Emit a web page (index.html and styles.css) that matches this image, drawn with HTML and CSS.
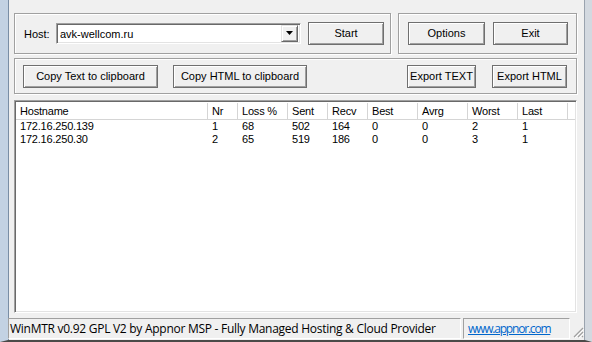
FILE: index.html
```html
<!DOCTYPE html>
<html lang="en">
<head>
    <meta charset="UTF-8">
    <title>WinMTR</title>
    <link rel="stylesheet" href="styles.css">
</head>
<body>
<div class="window">
    <div class="client">
        <div class="top-row">
            <div class="group host-group">
                <span class="host-label">Host:</span>
                <div class="combo">
                    <span class="combo-text">avk-wellcom.ru</span>
                    <span class="combo-btn">
                        <svg width="7" height="4" viewBox="0 0 7 4"><path d="M0 0h7L3.5 4z" fill="#000"/></svg>
                    </span>
                </div>
                <button class="btn btn-start">Start</button>
            </div>
            <div class="group opt-group">
                <button class="btn btn-options">Options</button>
                <button class="btn btn-exit">Exit</button>
            </div>
        </div>

        <div class="group export-group">
            <button class="btn btn-copy">Copy Text to clipboard</button>
            <button class="btn btn-copy2">Copy HTML to clipboard</button>
            <span class="spacer"></span>
            <button class="btn btn-etext">Export TEXT</button>
            <button class="btn btn-ehtml">Export HTML</button>
        </div>

        <div class="list">
            <div class="report">
                <div class="row head">
                    <span>Hostname</span>
                    <span>Nr</span>
                    <span>Loss %</span>
                    <span>Sent</span>
                    <span>Recv</span>
                    <span>Best</span>
                    <span>Avrg</span>
                    <span>Worst</span>
                    <span>Last</span>
                    <span></span>
                </div>
                <div class="row">
                    <span>172.16.250.139</span><span>1</span><span>68</span><span>502</span><span>164</span><span>0</span><span>0</span><span>2</span><span>1</span><span></span>
                </div>
                <div class="row">
                    <span>172.16.250.30</span><span>2</span><span>65</span><span>519</span><span>186</span><span>0</span><span>0</span><span>3</span><span>1</span><span></span>
                </div>
            </div>
        </div>
    </div>

    <div class="statusbar">
        <div class="panel panel-main">WinMTR v0.92 GPL V2 by Appnor MSP - Fully Managed Hosting &amp; Cloud Provider</div>
        <div class="panel panel-link"><a href="#">www.appnor.com</a></div>
        <div class="grip">
            <svg width="12" height="12" viewBox="0 0 12 12">
                <path d="M11 2L2 11M11 6L6 11M11 10L10 11" stroke="#a0a0a0" stroke-width="1.2"/>
                <path d="M12 3L3 12M12 7L7 12" stroke="#fff" stroke-width="1"/>
            </svg>
        </div>
    </div>
</div>
</body>
</html>
```

FILE: styles.css
```css
html, body {
    margin: 0;
    padding: 0;
}

body {
    width: 592px;
    height: 342px;
    overflow: hidden;
    background: #c9d6e4;
}

.window {
    width: 592px;
    height: 342px;
    box-sizing: border-box;
    display: flex;
    flex-direction: column;
    background: #f0f0f0;
    border-left: 8px solid #c3d2e3;
    border-right: 7px solid #d3d9e0;
    border-bottom: 2px solid #4b4a48;
    font-family: "Liberation Sans", Arial, sans-serif;
    font-size: 11px;
    color: #000;
    box-shadow: inset 1px 0 #7a8ea5, inset -1px 0 #9aa3ae;
}

.client {
    flex: 1;
    display: flex;
    flex-direction: column;
    padding: 13px 8px 0 6px;
    min-height: 0;
}

/* group boxes */
.group {
    box-sizing: border-box;
    border: 1px solid #a0a0a0;
    box-shadow: inset 1px 1px #fff, 1px 1px #fff;
    display: flex;
    align-items: center;
}

.top-row {
    display: flex;
    gap: 7px;
    height: 41px;
}

.host-group {
    width: 377px;
    padding-left: 9px;
    padding-bottom: 1px;
}

.host-label {
    width: 32px;
    padding-top: 1px;
}

.combo {
    box-sizing: border-box;
    width: 245px;
    height: 21px;
    display: flex;
    align-items: center;
    background: #fff;
    border: 1px solid;
    border-color: #a0a0a0 #fff #fff #a0a0a0;
    box-shadow: inset 1px 1px #696969, inset -1px -1px #e3e3e3;
    padding: 0 2px 0 3px;
}

.combo-text {
    flex: 1;
    padding-top: 1px;
}

.combo-btn {
    box-sizing: border-box;
    width: 17px;
    height: 17px;
    display: flex;
    align-items: center;
    justify-content: center;
    background: #f0f0f0;
    border: 1px solid;
    border-color: #e3e3e3 #696969 #696969 #e3e3e3;
    box-shadow: inset 1px 1px #fff, inset -1px -1px #a0a0a0;
}

.btn {
    box-sizing: border-box;
    height: 23px;
    padding: 0;
    font: inherit;
    color: #000;
    background: #f0f0f0;
    border: 1px solid #6f6f6f;
    box-shadow: inset 1px 1px #fff, inset -1px -1px #a0a0a0;
}

.btn-start {
    width: 76px;
    margin-left: 7px;
}

.opt-group {
    flex: 1;
    padding-left: 9px;
    padding-bottom: 1px;
    gap: 8px;
}

.btn-options {
    width: 77px;
}

.btn-exit {
    width: 75px;
}

.export-group {
    margin-top: 4px;
    height: 36px;
    padding: 0 9px 0 8px;
}

.btn-copy {
    width: 135px;
}

.btn-copy2 {
    width: 134px;
    margin-left: 15px;
}

.spacer {
    flex: 1;
}

.btn-etext {
    width: 69px;
}

.btn-ehtml {
    width: 75px;
    margin-left: 16px;
}

/* list view */
.list {
    flex: 1;
    margin-top: 6px;
    box-sizing: border-box;
    background: #fff;
    border: 1px solid;
    border-color: #a0a0a0 #fff #fff #a0a0a0;
    box-shadow: inset 1px 1px #696969, inset -1px -1px #e3e3e3;
    padding: 2px 1px 0 1px;
    overflow: hidden;
}

.report {
    letter-spacing: -0.2px;
}

.row {
    display: grid;
    grid-template-columns: 192px 30px 50px 40px 40px 50px 50px 50px 50px 1fr;
    height: 13px;
    line-height: 13px;
}

.row span {
    box-sizing: border-box;
    padding-left: 4px;
    white-space: nowrap;
}

.row.head {
    height: 17px;
    line-height: 16px;
}

.row.head span {
    border-right: 1px solid #d5d5d5;
    border-bottom: 1px solid #d5d5d5;
}

.row.head span:last-child {
    border-right: none;
}

/* status bar */
.statusbar {
    height: 24px;
    margin-top: 3px;
    display: flex;
    align-items: stretch;
    padding: 2px 0 1px 0;
    box-sizing: border-box;
    font-family: "Open Sans", "Noto Sans", sans-serif;
    font-size: 12px;
}

.panel {
    box-sizing: border-box;
    border: 1px solid;
    border-color: #a0a0a0 #fff #fff #a0a0a0;
    display: flex;
    align-items: center;
    white-space: nowrap;
}

.panel-main {
    width: 453px;
    padding-left: 1px;
    letter-spacing: -0.27px;
}

.panel-link {
    width: 107px;
    margin-left: 2px;
    padding-left: 4px;
}

.panel-link a {
    color: #0066cc;
    letter-spacing: -1.2px;
}

.grip {
    flex: 1;
    display: flex;
    align-items: flex-end;
    justify-content: flex-end;
    padding: 0 1px 1px 0;
}
```
